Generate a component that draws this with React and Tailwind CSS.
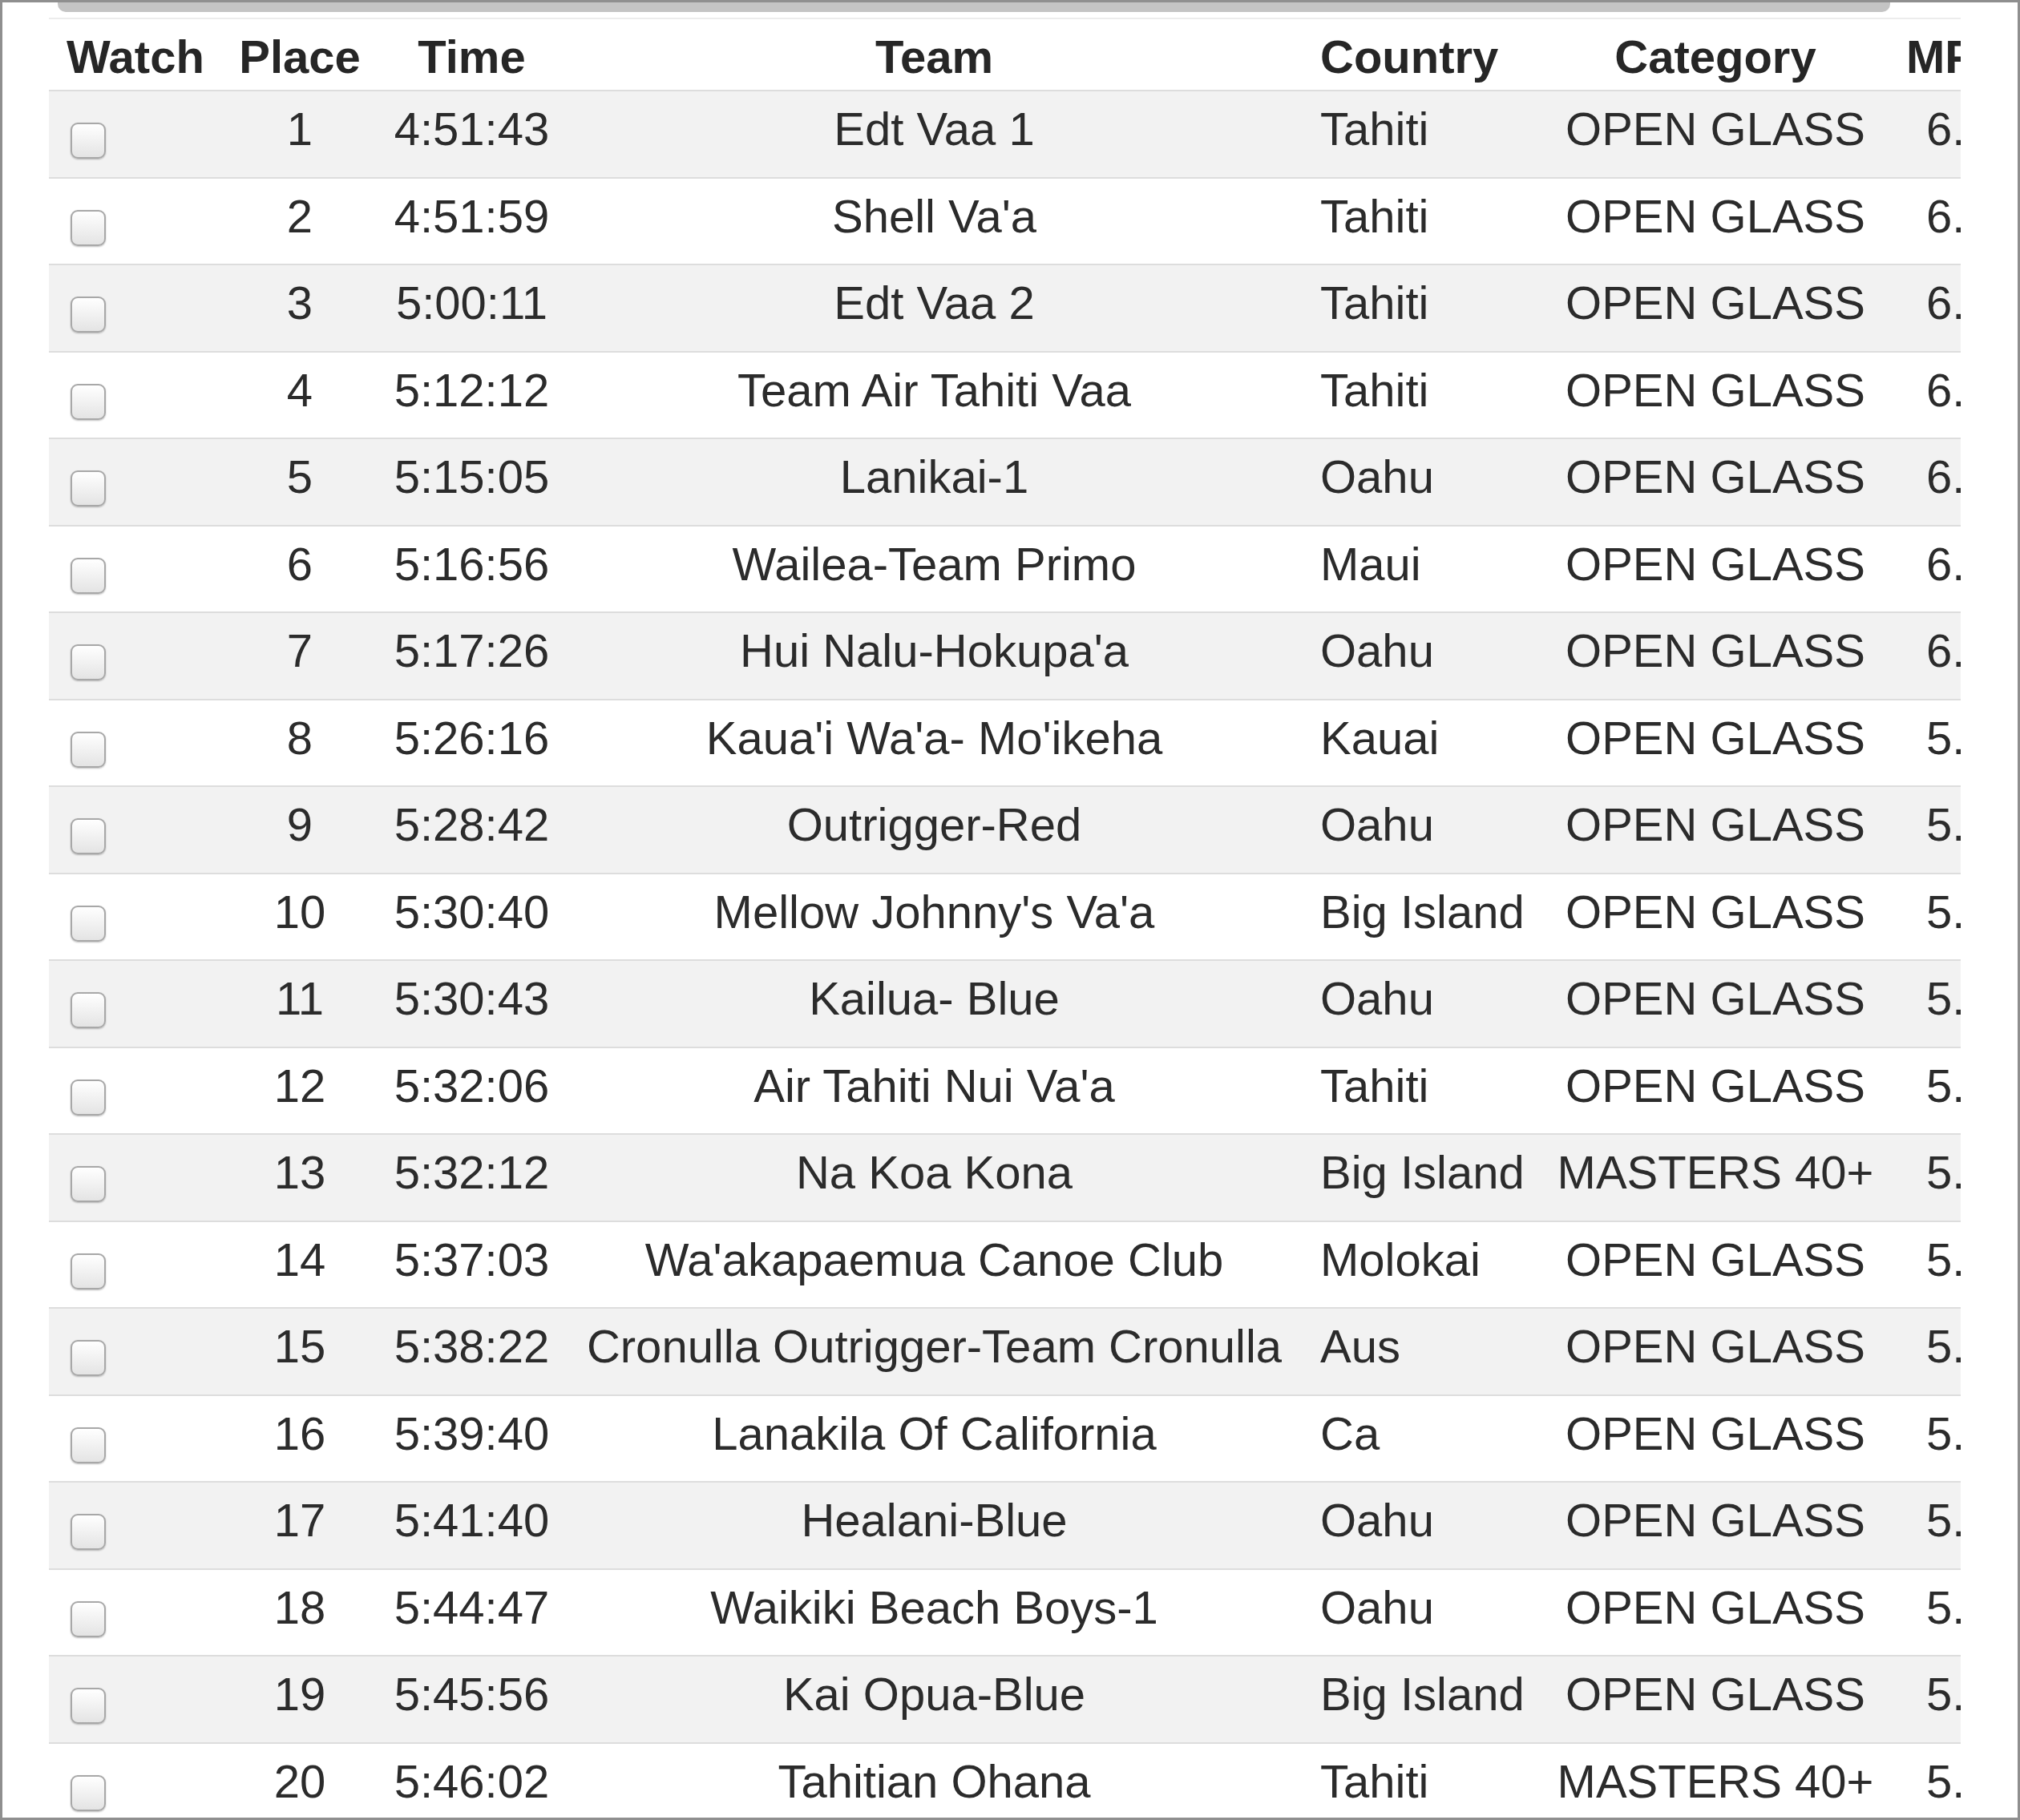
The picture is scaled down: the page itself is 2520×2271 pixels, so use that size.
const results = [
  ['1', '4:51:43', 'Edt Vaa 1', 'Tahiti', 'OPEN GLASS'],
  ['2', '4:51:59', "Shell Va'a", 'Tahiti', 'OPEN GLASS'],
  ['3', '5:00:11', 'Edt Vaa 2', 'Tahiti', 'OPEN GLASS'],
  ['4', '5:12:12', 'Team Air Tahiti Vaa', 'Tahiti', 'OPEN GLASS'],
  ['5', '5:15:05', 'Lanikai-1', 'Oahu', 'OPEN GLASS'],
  ['6', '5:16:56', 'Wailea-Team Primo', 'Maui', 'OPEN GLASS'],
  ['7', '5:17:26', "Hui Nalu-Hokupa'a", 'Oahu', 'OPEN GLASS'],
  ['8', '5:26:16', "Kaua'i Wa'a- Mo'ikeha", 'Kauai', 'OPEN GLASS'],
  ['9', '5:28:42', 'Outrigger-Red', 'Oahu', 'OPEN GLASS'],
  ['10', '5:30:40', "Mellow Johnny's Va'a", 'Big Island', 'OPEN GLASS'],
  ['11', '5:30:43', 'Kailua- Blue', 'Oahu', 'OPEN GLASS'],
  ['12', '5:32:06', "Air Tahiti Nui Va'a", 'Tahiti', 'OPEN GLASS'],
  ['13', '5:32:12', 'Na Koa Kona', 'Big Island', 'MASTERS 40+'],
  ['14', '5:37:03', "Wa'akapaemua Canoe Club", 'Molokai', 'OPEN GLASS'],
  ['15', '5:38:22', 'Cronulla Outrigger-Team Cronulla', 'Aus', 'OPEN GLASS'],
  ['16', '5:39:40', 'Lanakila Of California', 'Ca', 'OPEN GLASS'],
  ['17', '5:41:40', 'Healani-Blue', 'Oahu', 'OPEN GLASS'],
  ['18', '5:44:47', 'Waikiki Beach Boys-1', 'Oahu', 'OPEN GLASS'],
  ['19', '5:45:56', 'Kai Opua-Blue', 'Big Island', 'OPEN GLASS'],
  ['20', '5:46:02', 'Tahitian Ohana', 'Tahiti', 'MASTERS 40+'],
]

// course is roughly 32 miles
const mph = (time) => {
  const [h, m, s] = time.split(':').map(Number)
  return (32 / (h + m / 60 + s / 3600)).toFixed(2)
}

const Checkbox = () => (
  <span className="block w-[44px] h-[45px] mt-[39px] rounded-[9px] border-2 border-[#a8a8a8] bg-linear-to-b from-white to-[#e4e4e4] shadow-[0_1px_2px_rgba(0,0,0,0.25)]" />
)

const App = () => {
  return (
    <div
      className="w-[2520px] h-[2271px] border-[3px] border-[#8f8f8f] bg-white overflow-hidden text-[58px] text-[#2b2b2b]"
      style={{ fontFamily: '"Liberation Sans", Arial, sans-serif' }}
    >
      <div className="ml-[58px] w-[2385px] overflow-hidden">
        {/* scroll track */}
        <div className="h-[21px] border-b-2 border-[#ececec]">
          <div className="ml-[11px] w-[2286px] h-[12px] rounded-b-[10px] bg-[#c4c4c4]" />
        </div>

        {/* header */}
        <div className="flex h-[88px] font-bold text-[#262626] whitespace-nowrap">
          <div className="w-[216px] shrink-0 pl-[22px] pt-[3px]">Watch</div>
          <div className="w-[194px] shrink-0 pt-[3px] text-center">Place</div>
          <div className="w-[235px] shrink-0 pt-[3px] text-center">Time</div>
          <div className="w-[919px] shrink-0 pt-[3px] text-center">Team</div>
          <div className="w-[299px] shrink-0 pl-[22px] pt-[3px]">Country</div>
          <div className="w-[432px] shrink-0 pt-[3px] text-center">Category</div>
          <div className="w-[200px] shrink-0 pl-[22px] pt-[3px]">MPH</div>
        </div>

        {/* rows */}
        {results.map(([place, time, team, country, category], i) => (
          <div
            key={place}
            className={`flex h-[108.5px] border-t-2 border-[#dddddd] whitespace-nowrap ${i % 2 === 0 ? 'bg-[#f2f2f2]' : 'bg-white'}`}
          >
            <div className="w-[216px] shrink-0 pl-[27px]">
              <Checkbox />
            </div>
            <div className="w-[194px] shrink-0 pt-[3px] text-center">{place}</div>
            <div className="w-[235px] shrink-0 pt-[3px] text-center">{time}</div>
            <div className="w-[919px] shrink-0 pt-[3px] text-center">{team}</div>
            <div className="w-[299px] shrink-0 pl-[22px] pt-[3px]">{country}</div>
            <div className="w-[432px] shrink-0 pt-[3px] text-center">{category}</div>
            <div className="w-[200px] shrink-0 pl-[47px] pt-[3px]">{mph(time)}</div>
          </div>
        ))}
      </div>
    </div>
  )
}

export default App
